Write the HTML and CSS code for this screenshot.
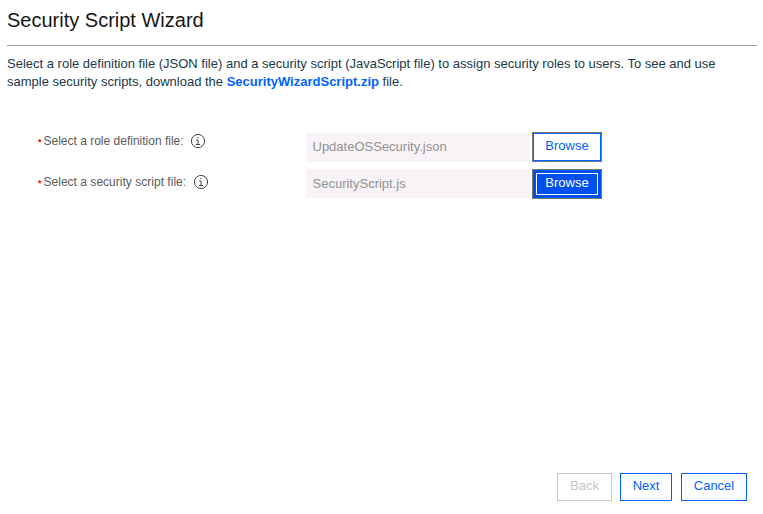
FILE: index.html
```html
<!DOCTYPE html>
<html lang="en">
<head>
<meta charset="utf-8">
<title>Security Script Wizard</title>
<link rel="stylesheet" href="styles.css">
</head>
<body>
<main class="wizard">
  <h1>Security Script Wizard</h1>
  <p class="intro">Select a role definition file (JSON file) and a security script (JavaScript file) to assign security roles to users. To see and use<br>sample security scripts, download the <a href="#">SecurityWizardScript.zip</a> file.</p>
  <form class="fields">
    <div class="row">
      <div class="label"><span class="req">*</span><span class="text">Select a role definition file:</span>
        <svg class="info" viewBox="0 0 16 16"><circle cx="8" cy="8" r="6.6"/><path d="M6.2 6.9H8V11.3M5.8 11.5H10.2M7.2 4.5H8.4"/></svg>
      </div>
      <div class="file">UpdateOSSecurity.json</div>
      <button type="button" class="browse">Browse</button>
    </div>
    <div class="row script">
      <div class="label"><span class="req">*</span><span class="text">Select a security script file:</span>
        <svg class="info" viewBox="0 0 16 16"><circle cx="8" cy="8" r="6.6"/><path d="M6.2 6.9H8V11.3M5.8 11.5H10.2M7.2 4.5H8.4"/></svg>
      </div>
      <div class="file">SecurityScript.js</div>
      <button type="button" class="browse active">Browse</button>
    </div>
  </form>
  <footer class="actions">
    <button type="button" class="back" disabled>Back</button>
    <button type="button" class="next">Next</button>
    <button type="button" class="cancel">Cancel</button>
  </footer>
</main>
</body>
</html>
```
FILE: styles.css
```css
* { box-sizing: border-box; }
body { margin: 0; background: #fff; font: 13px/18px "Liberation Sans", Arial, sans-serif; color: #20394a; }
.wizard { height: 514px; padding: 7px 6px 13px 7px; display: flex; flex-direction: column; }
h1 { margin: 0; height: 39px; border-bottom: 1px solid #999; font-size: 20px; line-height: 26px; font-weight: 400; color: #161616; }
.intro { margin: 9px 0 0; white-space: nowrap; }
.intro a { color: #0062ff; font-weight: 700; text-decoration: none; }
.fields { margin-top: 41px; display: flex; flex-direction: column; gap: 7px; }
.row { display: flex; height: 30px; }
.label { width: 299px; padding-left: 31px; display: flex; align-items: flex-start; font-size: 12px; line-height: 18px; color: #5a5a5a; }
.script .label { padding-top: 4px; }
.script .text { letter-spacing: 0.02px; }
.req { width: 5.5px; padding-top: 1px; color: #f00; font-size: 9px; font-weight: 700; }
.info { width: 16px; height: 16px; margin-left: 6.5px; margin-top: 1px; fill: none; stroke: #444; stroke-width: 1; }
.file { width: 224px; height: 29px; margin-top: 1px; padding-left: 6.5px; background: #f7f3f7; color: #929292; line-height: 28px; }
.script .file { margin-top: 0; line-height: 30px; }
button { margin: 0; padding: 0 0 2px; border: 1px solid #0062ff; background: #fff; color: #0062ff; font: inherit; height: 28px; }
.browse { width: 70px; height: 30px; margin-left: 2px; border-color: #777; box-shadow: inset 0 0 0 1px #0062ff; }
.browse.active { background: #0050f0; color: #fff; box-shadow: inset 0 0 0 3px #0050f0, inset 0 0 0 4px #fff; }
.actions { margin-top: auto; display: flex; justify-content: flex-end; padding-right: 10px; }
.back { width: 55px; border-color: #c6c6c6; color: #c6c6c6; margin-right: 8px; }
.next { width: 52px; margin-right: 9px; }
.cancel { width: 66px; }
```
